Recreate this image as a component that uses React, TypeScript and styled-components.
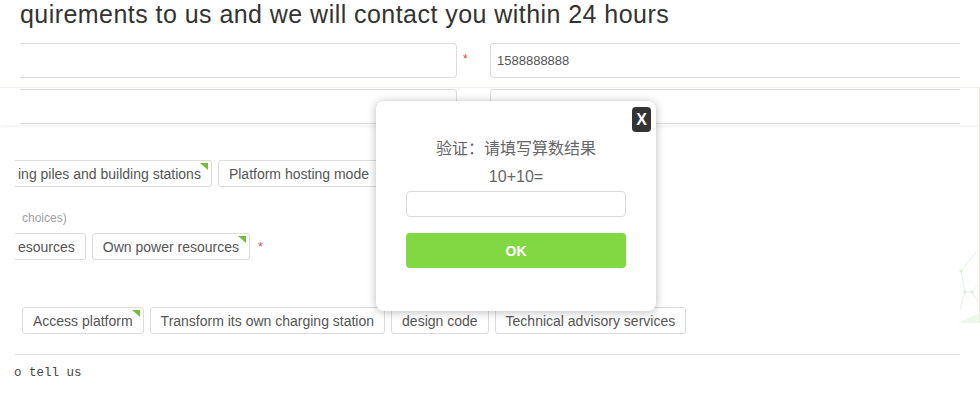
import React from "react";
import styled, { createGlobalStyle, css } from "styled-components";

const GlobalStyle = createGlobalStyle`
  html, body { margin: 0; padding: 0; background: #fff; }
  body { font-family: "Liberation Sans", Arial, sans-serif; color: #333; }
  * { box-sizing: border-box; }
`;

const Page = styled.div`
  position: relative;
  width: 980px;
  height: 396px;
  overflow: hidden;
  background: #fff;
`;

const Title = styled.h1`
  margin: 0;
  padding-left: 20px;
  font-size: 25px;
  letter-spacing: 0.45px;
  line-height: 28px;
  font-weight: normal;
  color: #333;
  white-space: nowrap;
`;

const FieldRow = styled.div`
  display: grid;
  grid-template-columns: 437px 33px 470px;
  margin: 15px 20px 0 20px;
  height: 35px;
`;

const Band = styled.div`
  margin-top: 9px;
  height: 38px;
  padding: 1px 20px 0 20px;
  border-top: 1px solid #f1f0e2;
  border-right: 1px solid #e6e5cc;
  box-shadow: 0 2px 3px rgba(0, 0, 0, 0.05);
  display: grid;
  grid-template-columns: 437px 33px 470px;
`;

const Input = styled.div<{ $cutLeft?: boolean; $cutRight?: boolean }>`
  height: 35px;
  border: 1px solid #dcdcdc;
  border-radius: 4px;
  background: #fff;
  font-size: 13px;
  color: #555;
  display: flex;
  align-items: center;
  padding-left: 6px;
  ${(p) =>
    p.$cutLeft &&
    css`
      border-left: none;
      border-top-left-radius: 0;
      border-bottom-left-radius: 0;
    `}
  ${(p) =>
    p.$cutRight &&
    css`
      border-right: none;
      border-top-right-radius: 0;
      border-bottom-right-radius: 0;
    `}
`;

const Star = styled.span<{ $top?: number; $left?: number }>`
  color: #e8413a;
  font-size: 12px;
  padding-left: ${(p) => p.$left ?? 6}px;
  padding-top: ${(p) => p.$top ?? 10}px;
  line-height: 12px;
`;

const TagRow = styled.div<{ $top: number; $left: number }>`
  display: flex;
  align-items: center;
  gap: 6px;
  margin-top: ${(p) => p.$top}px;
  padding-left: ${(p) => p.$left}px;
  height: 27px;
`;

const Tag = styled.div<{ $cut?: boolean }>`
  position: relative;
  height: 27px;
  display: flex;
  align-items: center;
  padding: 0 10px 0 10px;
  border: 1px solid #dcdcdc;
  border-radius: 3px;
  font-size: 14px;
  color: #555;
  white-space: nowrap;
  background: #fff;
  ${(p) =>
    p.$cut &&
    css`
      border-left: none;
      border-top-left-radius: 0;
      border-bottom-left-radius: 0;
      padding-left: 3px;
    `}
`;

const Corner = styled.span`
  position: absolute;
  top: 2px;
  right: 3px;
  width: 0;
  height: 0;
  border-top: 7px solid #72bd3a;
  border-left: 8px solid transparent;
`;

const Hint = styled.div`
  margin-top: 24px;
  padding-left: 22px;
  font-size: 12px;
  line-height: 14px;
  color: #a0a0a0;
`;

const Divider = styled.div`
  margin: 20px 20px 0 15px;
  border-top: 1px solid #e0e0e0;
`;

const Placeholder = styled.div`
  margin-top: 10px;
  padding-left: 14px;
  font-family: "Liberation Mono", "DejaVu Sans Mono", monospace;
  font-size: 12.5px;
  line-height: 16px;
  color: #444;
`;

const Decor = styled.svg`
  position: absolute;
  right: 0;
  top: 87px;
  width: 24px;
  height: 240px;
`;

const Modal = styled.div`
  position: absolute;
  left: 376px;
  top: 101px;
  width: 280px;
  height: 210px;
  background: #fff;
  border-radius: 8px;
  box-shadow: 0 1px 10px rgba(0, 0, 0, 0.28);
  padding: 36px 30px 0 30px;
  display: flex;
  flex-direction: column;
  align-items: stretch;
  text-align: center;
`;

const Close = styled.button`
  position: absolute;
  top: 6px;
  right: 5px;
  width: 19px;
  height: 25px;
  border: none;
  border-radius: 4px;
  background: #333;
  color: #fff;
  font-family: "Liberation Sans", Arial, sans-serif;
  font-size: 16px;
  font-weight: bold;
  line-height: 25px;
  padding: 0;
  cursor: pointer;
`;

const ModalText = styled.div<{ $gap?: number }>`
  margin-top: ${(p) => p.$gap ?? 0}px;
  font-family: "Liberation Sans", "Noto Sans CJK SC", sans-serif;
  font-size: 16px;
  line-height: 24px;
  color: #666;
`;

const ModalInput = styled.div`
  margin-top: 2px;
  height: 26px;
  border: 1px solid #d9d9d9;
  border-radius: 4px;
`;

const OkButton = styled.button`
  margin-top: 16px;
  height: 35px;
  border: none;
  border-radius: 4px;
  background: #82d843;
  color: #fff;
  font-family: "Liberation Sans", Arial, sans-serif;
  font-size: 14px;
  font-weight: bold;
  cursor: pointer;
`;

export default function App() {
  return (
    <>
      <GlobalStyle />
      <Page>
        <Title>quirements to us and we will contact you within 24 hours</Title>
        <FieldRow>
          <Input $cutLeft />
          <Star>*</Star>
          <Input $cutRight>1588888888</Input>
        </FieldRow>
        <Band>
          <Input $cutLeft />
          <span />
          <Input $cutRight />
        </Band>
        <TagRow $top={35} $left={15}>
          <Tag $cut>
            ing piles and building stations<Corner />
          </Tag>
          <Tag>Platform hosting mode</Tag>
        </TagRow>
        <Hint>choices)</Hint>
        <TagRow $top={8} $left={15}>
          <Tag $cut>esources</Tag>
          <Tag>
            Own power resources<Corner />
          </Tag>
          <Star $top={0} $left={2}>*</Star>
        </TagRow>
        <TagRow $top={47} $left={22}>
          <Tag>
            Access platform<Corner />
          </Tag>
          <Tag>Transform its own charging station</Tag>
          <Tag>design code</Tag>
          <Tag>Technical advisory services</Tag>
        </TagRow>
        <Divider />
        <Placeholder>o tell us</Placeholder>
        <Decor viewBox="0 0 24 240">
          <line x1="23.5" y1="0" x2="23.5" y2="236" stroke="#eeecd8" strokeWidth="1" />
          <g stroke="#e2f4e2" strokeWidth="1" fill="none">
            <polyline points="5,184 9,205 16,205 22,198" />
            <line x1="5" y1="184" x2="22" y2="163" />
            <line x1="9" y1="205" x2="4" y2="222" />
            <line x1="16" y1="205" x2="22" y2="215" />
          </g>
          <g fill="#d6f0d6">
            <circle cx="5" cy="184" r="1.6" />
            <circle cx="9" cy="205" r="1.6" />
            <circle cx="16" cy="205" r="1.6" />
          </g>
          <polygon points="2,236 23,226 23,236" fill="#ebf8eb" />
        </Decor>
        <Modal>
          <Close>X</Close>
          <ModalText>验证：请填写算数结果</ModalText>
          <ModalText $gap={4}>10+10=</ModalText>
          <ModalInput />
          <OkButton>OK</OkButton>
        </Modal>
      </Page>
    </>
  );
}
